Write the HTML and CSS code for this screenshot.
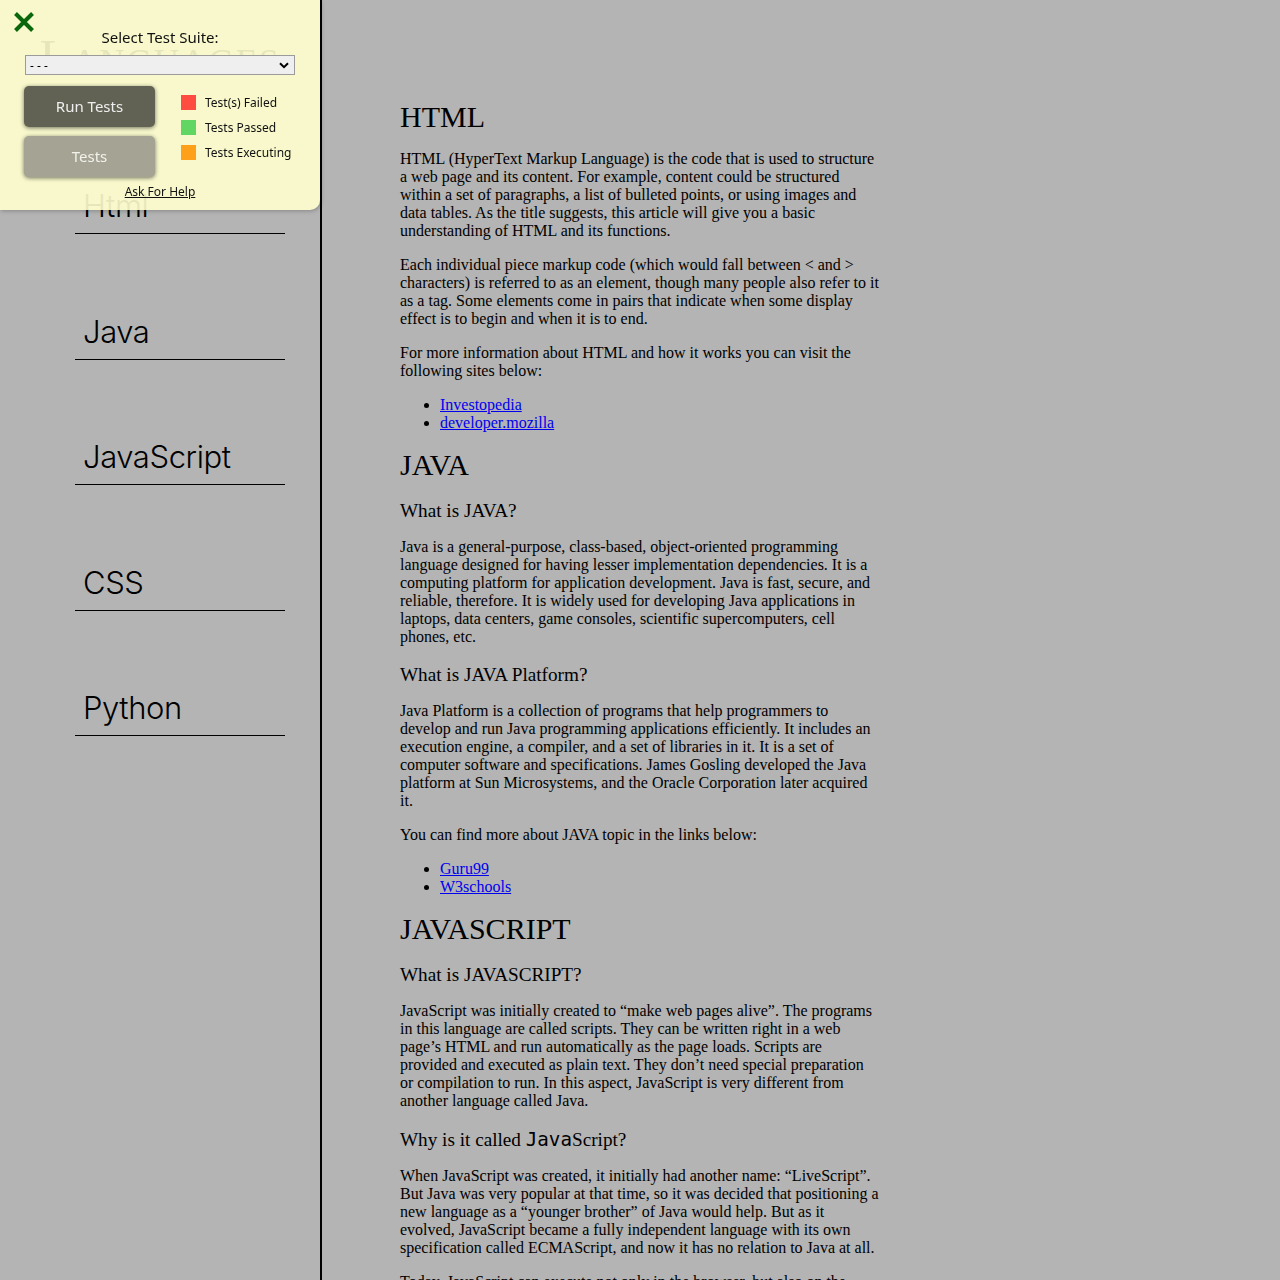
FILE: index.html
```html
<!DOCTYPE html>
<html lang="en">
<head>
<meta charset="utf-8">
<title>Languages Documentation</title>
<link rel="stylesheet" href="styles.css">
</head>
<body>
<nav id="navbar" class="navbar">
  <header class="nav-title">Languages</header>
  <ul class="nav-list">
    <li><a class="nav-link" href="#Html">Html</a></li>
    <li><a class="nav-link" href="#Java">Java</a></li>
    <li><a class="nav-link" href="#JavaScript">JavaScript</a></li>
    <li><a class="nav-link" href="#CSS">CSS</a></li>
    <li><a class="nav-link" href="#Python">Python</a></li>
  </ul>
</nav>

<main id="main-doc" class="main-doc">
  <section class="main-section" id="Html">
    <h1 class="sec-title">HTML</h1>
    <p>HTML (HyperText Markup Language) is the code that is used to structure a web page and its content. For example, content could be structured within a set of paragraphs, a list of bulleted points, or using images and data tables. As the title suggests, this article will give you a basic understanding of HTML and its functions.</p>
    <p>Each individual piece markup code (which would fall between &lt; and &gt; characters) is referred to as an element, though many people also refer to it as a tag. Some elements come in pairs that indicate when some display effect is to begin and when it is to end.</p>
    <p>For more information about HTML and how it works you can visit the following sites below:</p>
    <ul class="links">
      <li><a href="#Html">Investopedia</a></li>
      <li><a href="#Html">developer.mozilla</a></li>
    </ul>
  </section>

  <section class="main-section" id="Java">
    <h1 class="sec-title">JAVA</h1>
    <h3 class="sub-title">What is JAVA?</h3>
    <p>Java is a general-purpose, class-based, object-oriented programming language designed for having lesser implementation dependencies. It is a computing platform for application development. Java is fast, secure, and reliable, therefore. It is widely used for developing Java applications in laptops, data centers, game consoles, scientific supercomputers, cell phones, etc.</p>
    <h3 class="sub-title">What is JAVA Platform?</h3>
    <p>Java Platform is a collection of programs that help programmers to develop and run Java programming applications efficiently. It includes an execution engine, a compiler, and a set of libraries in it. It is a set of computer software and specifications. James Gosling developed the Java platform at Sun Microsystems, and the Oracle Corporation later acquired it.</p>
    <p>You can find more about JAVA topic in the links below:</p>
    <ul class="links">
      <li><a href="#Java">Guru99</a></li>
      <li><a href="#Java">W3schools</a></li>
    </ul>
  </section>

  <section class="main-section" id="JavaScript">
    <h1 class="sec-title">JAVASCRIPT</h1>
    <h3 class="sub-title">What is JAVASCRIPT?</h3>
    <p>JavaScript was initially created to “make web pages alive”. The programs in this language are called scripts. They can be written right in a web page’s HTML and run automatically as the page loads. Scripts are provided and executed as plain text. They don’t need special preparation or compilation to run. In this aspect, JavaScript is very different from another language called Java.</p>
    <h3 class="sub-title">Why is it called <code class="mono">Java</code>Script?</h3>
    <p>When JavaScript was created, it initially had another name: “LiveScript”. But Java was very popular at that time, so it was decided that positioning a new language as a “younger brother” of Java would help. But as it evolved, JavaScript became a fully independent language with its own specification called ECMAScript, and now it has no relation to Java at all.</p>
    <p>Today, JavaScript can execute not only in the browser, but also on the server, or actually on any device that has a special program called the JavaScript engine.</p>
  </section>

  <section class="main-section" id="CSS">
    <h1 class="sec-title">CSS</h1>
    <p>CSS (Cascading Style Sheets) is the language used to style a web page: colours, fonts, layout and spacing.</p>
  </section>

  <section class="main-section" id="Python">
    <h1 class="sec-title">PYTHON</h1>
    <p>Python is a high-level, general-purpose programming language that emphasizes code readability.</p>
  </section>
</main>

<div class="fcc-panel">
  <button class="fcc-close" type="button" aria-label="Close">
    <svg width="22" height="22" viewBox="0 0 22 22"><path d="M2.5 2.5 L19.5 19.5 M19.5 2.5 L2.5 19.5" stroke="#0b670b" stroke-width="4" fill="none"/></svg>
  </button>
  <div class="fcc-label">Select Test Suite:</div>
  <div class="fcc-select-wrap">
    <select class="fcc-select"><option>- - -</option></select>
    <svg class="fcc-chevron" width="10" height="7" viewBox="0 0 10 7"><path d="M1 1.2 L5 5.2 L9 1.2" stroke="#000" stroke-width="2" fill="none"/></svg>
  </div>
  <div class="fcc-row">
    <div class="fcc-buttons">
      <button class="fcc-btn fcc-run" type="button">Run Tests</button>
      <button class="fcc-btn fcc-tests" type="button">Tests</button>
    </div>
    <ul class="fcc-legend">
      <li><span class="sw sw-fail"></span>Test(s) Failed</li>
      <li><span class="sw sw-pass"></span>Tests Passed</li>
      <li><span class="sw sw-exec"></span>Tests Executing</li>
    </ul>
  </div>
  <a class="fcc-help" href="#">Ask For Help</a>
</div>
</body>
</html>
```

FILE: styles.css
```css
* { box-sizing: border-box; }

html, body { margin: 0; padding: 0; }

body {
  display: flex;
  align-items: stretch;
  min-height: 1280px;
  background: #b4b4b4;
  font-family: "Liberation Serif", "Times New Roman", serif;
  font-size: 16px;
  color: #000;
}

/* ---------- sidebar ---------- */
.navbar {
  flex: 0 0 322px;
  border-right: 2px solid #000;
  display: flex;
  flex-direction: column;
}

.nav-title {
  margin-top: 29px;
  font-family: "Liberation Serif", serif;
  font-size: 50px;
  line-height: 57px;
  font-variant: small-caps;
  letter-spacing: 2px;
  text-align: center;
  color: #000;
}

.nav-list {
  list-style: none;
  margin: 100px 0 0 75px;
  padding: 0;
  display: flex;
  flex-direction: column;
  gap: 77.5px;
}

.nav-link {
  display: block;
  width: 210px;
  padding: 0 8px 7px;
  font-family: Inter, Lato, sans-serif;
  font-weight: 300;
  font-size: 31px;
  line-height: 40px;
  letter-spacing: -0.4px;
  color: #000;
  text-decoration: none;
  border-bottom: 1px solid #000;
}

/* ---------- main ---------- */
.main-doc {
  flex: 0 0 558px;
  padding: 84px 0 40px 78px;
}

.sec-title {
  font-size: 30px;
  line-height: 34px;
  font-weight: normal;
  margin: 16px 0 16px;
}

.sub-title {
  font-size: 19.2px;
  font-weight: normal;
  margin: 18px 0 16px;
}

.mono {
  font-family: "DejaVu Sans Mono", "Liberation Mono", monospace;
  font-size: 1em;
}

.main-section p { margin: 16px 0; }

.links { margin: 16px 0; padding-left: 40px; }
.links a { color: #0000ee; }

/* ---------- test suite panel ---------- */
.fcc-panel {
  position: fixed;
  top: 0;
  left: 0;
  width: 320px;
  height: 210px;
  display: flex;
  flex-direction: column;
  align-items: center;
  background: rgba(255, 255, 206, 0.9);
  border-radius: 0 0 10px 0;
  box-shadow: 1px 1px 4px rgba(0, 0, 0, 0.25);
  font-family: "Noto Sans", "Open Sans", sans-serif;
  color: #111;
}

.fcc-close {
  position: absolute;
  top: 11px;
  left: 13px;
  width: 22px;
  height: 22px;
  padding: 0;
  border: 0;
  background: transparent;
  display: flex;
}

.fcc-label {
  margin-top: 27px;
  font-size: 15px;
  line-height: 20px;
}

.fcc-select-wrap {
  position: relative;
  margin-top: 8px;
  width: 270px;
  height: 20px;
}

.fcc-select {
  appearance: none;
  -webkit-appearance: none;
  display: block;
  width: 270px;
  height: 20px;
  margin: 0;
  padding: 0 4px;
  background: #efefef;
  border: 1px solid #9b9b9b;
  border-radius: 0;
  font-family: "Noto Sans", sans-serif;
  font-size: 12px;
  color: #000;
}

.fcc-chevron {
  position: absolute;
  right: 6px;
  top: 7px;
}

.fcc-row {
  align-self: stretch;
  display: flex;
  gap: 26px;
  margin-top: 11px;
  padding-left: 24px;
}

.fcc-buttons {
  display: flex;
  flex-direction: column;
  gap: 9px;
}

.fcc-btn {
  width: 131px;
  height: 41px;
  padding: 0 0 2px;
  border: 0;
  border-radius: 5px;
  font-family: "Noto Sans", sans-serif;
  font-size: 15px;
  box-shadow: 0 1px 4px rgba(0, 0, 0, 0.55);
}

.fcc-run { background: #626254; color: #eeeeee; }
.fcc-tests { background: #a4a394; color: #f2f2ea; }

.fcc-legend {
  list-style: none;
  margin: 0;
  padding: 9px 0 0;
  display: flex;
  flex-direction: column;
  gap: 10px;
  font-size: 12px;
}

.fcc-legend li {
  display: flex;
  align-items: center;
  height: 15px;
}

.sw {
  width: 15px;
  height: 15px;
  margin-right: 9px;
}
.sw-fail { background: #ff4c40; }
.sw-pass { background: #62d662; }
.sw-exec { background: #ffa01a; }

.fcc-help {
  margin-top: 6px;
  font-size: 12px;
  line-height: 17px;
  color: #111;
  text-decoration: underline;
}
```
